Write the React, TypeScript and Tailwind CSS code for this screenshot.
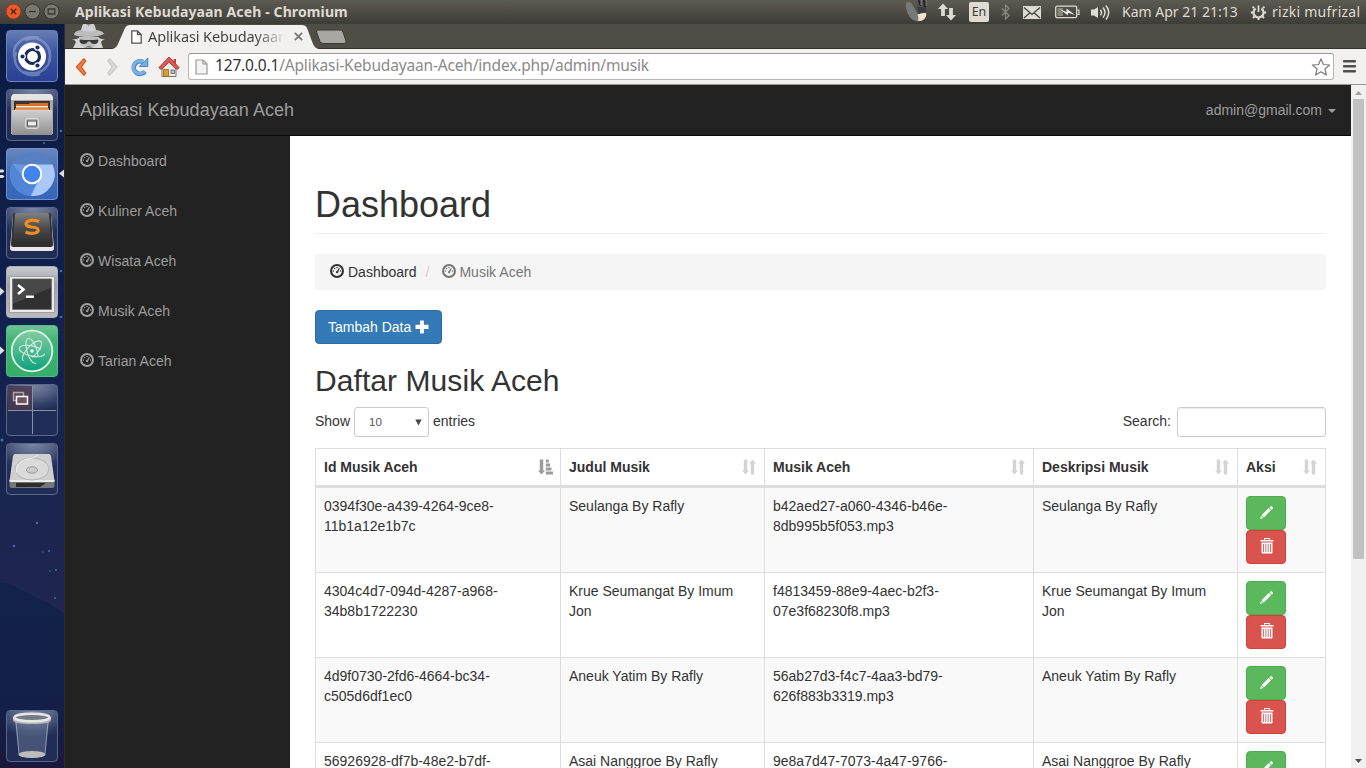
import React from "react";

/* ---------- page icons ---------- */

const Gauge = ({ className = "" }: { className?: string }) => (
  <svg className={`h-[14px] w-[14px] shrink-0 ${className}`} viewBox="0 0 14 14">
    <circle cx="7" cy="7" r="5.95" fill="none" stroke="currentColor" strokeWidth="2.1" />
    <g fill="currentColor">
      <circle cx="3.4" cy="6.9" r=".75" />
      <circle cx="4.6" cy="4.500" r=".75" />
      <circle cx="7" cy="3.500" r=".75" />
      <circle cx="10.500" cy="6.900" r=".75" />
      <path d="M8.900 3.800l.9.400-1.500 3.500c.2.900-.4 1.500-1.200 1.500-.9 0-1.400-.7-1.200-1.400.2-.5.600-.7 1.100-.8z" />
    </g>
  </svg>
);

const Plus = () => (
  <svg className="h-[14px] w-[14px]" viewBox="0 0 14 14" fill="currentColor">
    <path d="M5 .500h3.500q.4 0 .4.400V4.700H13q.5 0 .5.400V8.400q0 .5-.5.5H8.900V13q0 .4-.4.400H5.400Q5 13.400 5 13V8.900H1q-.5 0-.5-.5V5.100Q.5 4.700 1 4.700h4z" />
  </svg>
);

const Pencil = () => (
  <svg className="-mt-[2px] h-[15px] w-[15px]" viewBox="0 0 16 16" fill="#fff">
    <path d="M12.200 1.500q.8-.8 1.600 0l.8.8q.8.8 0 1.600l-1.100 1.100-2.400-2.400z" />
    <path d="M10.400 3.300l2.400 2.400-7.700 7.700-2.400-2.400z" />
    <path d="M2.200 11.700l2.200 2.200-3.400 1.100z" />
  </svg>
);

const Trash = () => (
  <svg className="h-[16px] w-[14px]" viewBox="0 0 14 16">
    <path d="M4.500 0h5q.5 0 .5.500V2h3q.500 0 .500.500V3.500H.500V2.500Q.500 2 1 2h3V.500Q4 0 4.500 0zM5 1v1h4V1z" fill="#fff" fillRule="evenodd" />
    <path d="M1.500 4.500h11v10q0 1-1 1h-9q-1 0-1-1z" fill="#fff" />
    <path d="M3.500 6v8M5.800 6v8M8.200 6v8M10.500 6v8" stroke="#d9706c" strokeWidth="1" />
  </svg>
);

const SortBoth = () => (
  <svg className="h-[16px] w-[14px] shrink-0" viewBox="0 0 14 16" fill="#d4d4d4">
    <path d="M1.800 .500h3.400V11.500H7L3.500 15.500 0 11.500h1.800zM8.800 15.500h3.400V4.500H14L10.500 .500 7 4.500h1.800z" />
  </svg>
);

const SortAsc = () => (
  <svg className="h-[16px] w-[15px] shrink-0" viewBox="0 0 15 16" fill="#9b9b9b">
    <path d="M1.800 .500h3.400V11.500H7L3.500 15.500 0 11.500h1.800zM7.800 .500h3v2.900h-3zM7.800 4.500h4.200v2.900H7.800zM7.800 8.500h5.600v2.900H7.800zM7.800 12.500H15v3H7.800z" />
  </svg>
);

/* ---------- launcher ---------- */

const Tile = ({ children, className = "" }: { children: React.ReactNode; className?: string }) => (
  <div className={`relative h-[52px] w-[52px] shrink-0 rounded-[4px] border ${className}`}>
    <svg className="absolute -left-px -top-px h-[52px] w-[52px]" viewBox="0 0 52 52">
      {children}
    </svg>
  </div>
);

const GLASS =
  "border-[#5c678a] bg-[radial-gradient(44px_26px_at_26px_0px,#7a86a3_0%,#5b6788_40%,#2f3c64_80%,#202d56_100%)]";

const Launcher = () => (
  <aside className="relative flex w-[65px] shrink-0 flex-col items-center gap-[7px] border-r border-[#2c2a35] bg-[#14214b] pb-[6px] pt-[6px]">
    <svg className="absolute left-0 top-0 h-[744px] w-[64px]" viewBox="0 0 64 744">
      <defs>
        <linearGradient id="sky" x1="0" y1="0" x2="0" y2="1">
          <stop offset="0" stopColor="#0b1a40" />
          <stop offset=".35" stopColor="#10204e" />
          <stop offset=".65" stopColor="#1a2450" />
          <stop offset=".8" stopColor="#202650" />
          <stop offset="1" stopColor="#1b2148" />
        </linearGradient>
        <linearGradient id="hill" x1="0" y1="0" x2="0" y2="1">
          <stop offset="0" stopColor="#12224a" />
          <stop offset=".7" stopColor="#131f48" />
          <stop offset="1" stopColor="#1a183c" />
        </linearGradient>
      </defs>
      <path fill="url(#sky)" d="M0 0h64v744H0z" />
      <path fill="url(#hill)" d="M0 558q8 0 18 6l28 14 18 11v155H0z" />
      <g fill="#3b74a8">
        <circle cx="61" cy="107" r="1.300" />
        <circle cx="44" cy="119" r="1" />
        <circle cx="61" cy="247" r="1.200" />
        <circle cx="61" cy="293" r="1.300" />
        <circle cx="2" cy="416" r="1.500" />
        <circle cx="37" cy="499" r="1.200" />
        <circle cx="14" cy="522" r="1.200" />
        <circle cx="49" cy="527" r="1" />
        <circle cx="56" cy="546" r="1.100" />
        <circle cx="50" cy="547" r=".8" />
        <circle cx="55" cy="574" r="1" />
        <circle cx="43" cy="528" r=".7" />
      </g>
      <g fill="#dedfe3">
        <path d="M0 145.500h3l1.500 1.500L3 148.500H0zM0 151h3l1.500 1.500L3 154H0zM64 145.500v8l-5-4z" />
        <path d="M0 263.500l4.500 4-4.500 4zM0 322.500l4.500 4-4.500 4z" />
      </g>
    </svg>

    <Tile className="border-[#6a80b8] bg-[linear-gradient(#667db4,#3a53a0_45%,#2a4193)]">
      <g fill="none" stroke="#a3b2d8" strokeOpacity=".5" strokeWidth="2.500">
        <path d="M9 29C4 15 18 4 33 8M19 10c15-6 29 6 24 22M43 21c5 15-9 26-25 21M34 44C18 49 5 36 10 22" />
      </g>
      <circle cx="26" cy="26.500" r="14" fill="#fff" />
      <circle cx="26.500" cy="26.500" r="7" fill="none" stroke="#1c2a5c" strokeWidth="3.200" />
      <g fill="#1c2a5c" stroke="#fff" strokeWidth="1.200">
        <circle cx="16.500" cy="26.500" r="2.700" />
        <circle cx="31.500" cy="17.500" r="2.700" />
        <circle cx="31.500" cy="35.500" r="2.700" />
      </g>
    </Tile>

    <Tile className={GLASS}>
      <defs>
        <linearGradient id="cab" x1="0" y1="0" x2="0" y2="1">
          <stop offset="0" stopColor="#d0d0d0" />
          <stop offset="1" stopColor="#8f8f8f" />
        </linearGradient>
      </defs>
      <path fill="#a8a8a8" d="M5 9q1-4 3-4h36q2 0 3 4v36H5z" />
      <path fill="#e4e4e4" d="M5 9q1-4 3-4h36q2 0 3 4v2H5z" />
      <path fill="#3b3532" d="M8 12h36v10H8z" />
      <path fill="#d8712d" d="M10 15h13l1-1h18v7H10z" />
      <path fill="#f4ead8" d="M10 17h32v1.500H10z" />
      <path fill="#ee9a55" d="M9 19.500h34V21H9z" />
      <path fill="url(#cab)" d="M7 21h38l1 1v24H6V22z" />
      <rect x="19.500" y="29.500" width="13" height="10" rx="2" fill="#b0b0b0" stroke="#dcdcdc" />
      <rect x="21.500" y="32" width="9" height="5" fill="#eee" stroke="#555" />
    </Tile>

    <Tile className="border-[#6f94cf] bg-[linear-gradient(#6887bd,#416cb5_50%,#3766ba)]">
      <circle cx="26" cy="26" r="22" fill="#6a99e2" />
      <path d="M6.500 16A22 22 0 0 1 46.500 17H26z" fill="#587fc2" />
      <path d="M6.500 16A22 22 0 0 0 24 48l8-17-14-1z" fill="#5085da" />
      <path d="M29 16.500h17.500A22 22 0 0 1 25 48l9-18z" fill="#a9c8f6" />
      <circle cx="26" cy="26" r="10.300" fill="#fff" />
      <circle cx="26" cy="26" r="8.300" fill="#4285f0" />
    </Tile>

    <Tile className={GLASS}>
      <defs>
        <linearGradient id="key" x1="0" y1="0" x2="0" y2="1">
          <stop offset="0" stopColor="#808080" />
          <stop offset=".55" stopColor="#4a4a4a" />
          <stop offset="1" stopColor="#333" />
        </linearGradient>
      </defs>
      <path d="M7 8L4 41q0 3 3 3h38q3 0 3-3L45 8z" fill="#e8e8e8" />
      <path d="M9 6h34q2 0 2 2l2 29q0 3-2 3H7q-2 0-2-3L7 8q0-2 2-2z" fill="#2f2f2f" />
      <path d="M10 6h32q1 0 1.200 2L45 34H7L8.800 8Q9 6 10 6z" fill="url(#key)" />
      <path d="M33 14.500q-6-2.500-10.500-.5-3.500 2-2 4 1 1.500 5 2 6 .5 6.500 2.500 1 2.500-3 3.500-5 1-9.500-1" fill="none" stroke="#f28c22" strokeWidth="3.200" />
    </Tile>

    <Tile className="border-[#aeb0b8] bg-[linear-gradient(#c9cacf,#9fa1a8_35%,#b9babd)]">
      <path d="M3.500 10.500h45v36h-45z" fill="#ebebeb" stroke="#a0a0a0" />
      <path d="M6.500 13h39v30.500h-39z" fill="#303030" stroke="#777" />
      <path d="M7 13.500h38v8L7 38z" fill="#484848" />
      <path d="M12 19l5.500 4.500L12 28" fill="none" stroke="#fff" strokeWidth="2.600" />
      <path d="M20 29.500h8V32h-8z" fill="#fff" />
    </Tile>

    <Tile className="border-[#55b982] bg-[linear-gradient(#6dc494,#3eb371_30%,#35ae69)]">
      <defs>
        <linearGradient id="atom" x1="0" y1="0" x2="0" y2="1">
          <stop offset="0" stopColor="#83cd9f" />
          <stop offset="1" stopColor="#0da27b" />
        </linearGradient>
      </defs>
      <circle cx="26" cy="26" r="20.300" fill="url(#atom)" stroke="#e1f4e9" strokeWidth="1.800" />
      <g fill="none" stroke="#d4eee0" strokeWidth="1.100" strokeLinecap="round">
        <ellipse cx="26" cy="26" rx="13" ry="5" transform="rotate(13 26 26)" strokeDasharray="52 8" />
        <ellipse cx="26" cy="26" rx="13" ry="5" transform="rotate(73 26 26)" strokeDasharray="50 10" />
        <ellipse cx="26" cy="26" rx="13" ry="5" transform="rotate(133 26 26)" strokeDasharray="48 12" />
      </g>
      <circle cx="26" cy="26" r="1.700" fill="#fff" />
    </Tile>

    <Tile className={GLASS}>
      <path d="M2 2h24v24H2z" fill="#4b3a50" opacity=".85" />
      <path d="M26.500 2v48M2 26.500h48" stroke="#8991a8" strokeWidth="1" />
      <path d="M7.500 8.500h10v8h-10z" fill="#5c4a5a" stroke="#aaa6b0" strokeWidth="1.500" />
      <path d="M10.500 12.500h11v7.500h-11z" fill="#6e5564" stroke="#fff" strokeWidth="1.500" />
    </Tile>

    <Tile className={GLASS}>
      <path d="M9 11h34q1 0 2 2l3.500 25h-45L7 13q1-2 2-2z" fill="#cfcfcf" />
      <path d="M3.500 37h45v6q0 2-2 2h-41q-2 0-2-2z" fill="#777" />
      <path d="M3.500 37h45v2h-45z" fill="#ededed" />
      <path d="M10 40h30l-6 4H10z" fill="#2c2c2c" />
      <ellipse cx="26" cy="26" rx="17" ry="11" fill="#dadada" stroke="#b4b4b4" />
      <ellipse cx="26" cy="27" rx="5.500" ry="3.300" fill="#c9c9c9" stroke="#9a9a9a" />
      <path d="M10 30q0-12 11-14 8-1 11-4" fill="none" stroke="#eee" />
    </Tile>

    <Tile className={`mt-auto ${GLASS}`}>
      <path d="M9 11h34l-4 34q-13 5-26 0z" fill="#8590ab" opacity=".38" />
      <path d="M10 12l3 32M42 12l-3 32" stroke="#c8ccd8" strokeWidth="1" opacity=".6" />
      <ellipse cx="26" cy="44.500" rx="13.500" ry="3.500" fill="#b9bdbd" />
      <path d="M7 7v3q0 4 19 4t19-4V7z" fill="#b5b8b8" />
      <ellipse cx="26" cy="7.500" rx="17.500" ry="3.700" fill="#747b87" stroke="#e6e7e5" strokeWidth="2.500" />
    </Tile>
  </aside>
);

/* ---------- system bar ---------- */

const WindowButton = ({ d, close }: { d: string; close?: boolean }) => (
  <svg className="h-[17px] w-[17px]" viewBox="0 0 17 17">
    <circle cx="8.500" cy="8.500" r="7.500" fill={close ? "#ec5a29" : "#7b7870"} stroke={close ? "#8c3a1c" : "#373530"} />
    <path d={d} stroke={close ? "#4b2515" : "#38362f"} strokeWidth="1.300" fill="none" />
  </svg>
);

const SystemBar = () => (
  <header className="flex h-6 shrink-0 items-center bg-[linear-gradient(#5d5a51,#3d3c37)] font-['Noto_Sans',sans-serif] text-[#dfdbd2]">
    <div className="-mt-px flex w-[75px] shrink-0 gap-[2px] pl-[5px]">
      <WindowButton close d="M5.800 5.800l5.400 5.400M11.200 5.800l-5.400 5.400" />
      <WindowButton d="M5 8.500h7" />
      <WindowButton d="M5.200 6h6.600v5H5.200z" />
    </div>
    <span className="-mt-[2px] whitespace-nowrap text-[14px] font-bold tracking-[0.12px]">Aplikasi Kebudayaan Aceh - Chromium</span>
    <svg className="ml-auto h-[24px] w-[24px] shrink-0" viewBox="0 0 24 24">
      <path d="M1 3q3-3 6 1l6 10q5-2 8-1 1 4-3 7-3 2-7 1-5-1-8-7Q0 8 1 3z" fill="#757977" />
      <path d="M12.500 14.500q4-2 8.500-1.500 1 4-3 7-3 1.500-5 .5 1-3-.5-6z" fill="#ece5cb" />
      <path d="M13 0h3v6l-2-1zM18 0h3v7l-2 1z" fill="#1d1e22" />
      <path d="M14.500 0h1.500v5M19.500 0H21v6" stroke="#8b92a0" strokeWidth=".8" fill="none" />
      <path d="M12 7h9v5q-4 0-7 2z" fill="#3c3f41" />
    </svg>
    <svg className="ml-[9px] h-[18px] w-[18px] shrink-0" viewBox="0 0 18 18" fill="#dfdbd2">
      <path d="M5 .500l5 5.500H6.900V13H3.100V6H0zM13 17.500L8 12h3.100V5h3.800v7H18z" />
    </svg>
    <span className="ml-[13px] flex h-5 w-5 shrink-0 items-center justify-center rounded-[2px] bg-[#dfdbd2] text-[12.500px] leading-5 text-[#3c3b37]">En</span>
    <svg className="ml-[12px] h-[16px] w-[9px] shrink-0" viewBox="0 0 9 16" fill="none" stroke="#8b8880" strokeWidth="1.200">
      <path d="M1 4.500l7 7L4.500 15V1L8 4.500l-7 7" />
    </svg>
    <svg className="ml-[13px] h-[13px] w-[18px] shrink-0" viewBox="0 0 18 13">
      <path d="M0 0h18v13H0z" fill="#dfdbd2" />
      <path d="M1 1.500l8 7 8-7M1 12l6-5.300M17 12l-6-5.300" fill="none" stroke="#45433d" strokeWidth="1.300" />
    </svg>
    <svg className="ml-[14px] h-[14px] w-[25px] shrink-0" viewBox="0 0 25 14">
      <rect x=".7" y="1.200" width="21" height="11.500" rx="1.500" fill="none" stroke="#dfdbd2" strokeWidth="1.300" />
      <path d="M22.500 5H24v4.500h-1.500" fill="none" stroke="#dfdbd2" strokeWidth="1.200" />
      <path d="M2.500 3H8v8H2.500z" fill="#89867d" />
      <path d="M4.500 4l7 3V3.500l8.500 6.500-7-2.300v2.800z" fill="#eceae4" />
    </svg>
    <svg className="ml-[10px] h-[17px] w-[21px] shrink-0" viewBox="0 0 21 17">
      <path d="M1 5.500h3L8 3v11l-4-2.500H1z" fill="#dfdbd2" />
      <path d="M10.500 5.800q2 2.700 0 5.400M13 3.500q4 5 0 10M16 1.500q5.500 7 0 14" fill="none" stroke="#dfdbd2" strokeWidth="1.500" />
    </svg>
    <span className="-mt-[2px] ml-[11px] w-[117px] shrink-0 whitespace-nowrap text-[14px]">Kam Apr 21 21:13</span>
    <svg className="ml-[11px] h-[17px] w-[17px] shrink-0" viewBox="0 0 17 17" fill="none" stroke="#dfdbd2">
      <path d="M5.500 4.500a5 5 0 1 0 6 0" strokeWidth="2.200" />
      <path d="M8.500 1.500v6.500" strokeWidth="1.800" />
      <path d="M4 4L2.600 2.600M13 4l1.400-1.400M3.500 8.500H.8M13.500 8.500h2.700M4.800 12.200l-1.800 1.800M12.200 12.200l1.800 1.800M8.500 13.300V16" strokeWidth="2" />
    </svg>
    <span className="-mt-[2px] ml-[5px] w-[94px] shrink-0 whitespace-nowrap text-[14px] tracking-[0.26px]">rizki mufrizal</span>
  </header>
);

/* ---------- browser chrome ---------- */

const TabStrip = () => (
  <div className="flex h-[25px] shrink-0 border-b border-[#35332e] bg-[#504d46] font-['Noto_Sans',sans-serif]">
    <svg className="ml-[6px] h-[24px] w-[36px]" viewBox="0 0 36 24">
      <path d="M9 9l2.500-8Q12 0 13 0h9q1 0 1.500 1L26 9z" fill="#d0d0d0" />
      <path d="M15 0l2.500 2L20 0z" fill="#8b8b8b" />
      <path d="M3 11q0-4 7-5 8 3 16 0 6 1 7 4-6 3-15 3T3 11z" fill="#bcbcbc" />
      <path d="M1 15q5 1 8-2h18q3 3 7 2-4 2-4 3l2 6H2l3-6q-1-2-4-3z" fill="#d6d6d6" />
      <path d="M8 13h20l-2 7-5 4h-7l-5-4z" fill="#bebebe" />
      <path d="M9 15.500q9 1 18 0l.5 1.500q-1 3-4 3-3.500 0-4.300-2.500h-2.400Q16 20 12.500 20q-3 0-4-3z" fill="#3a3a3a" />
      <path d="M14 23.500l4-2 4 2z" fill="#777" />
    </svg>
    <div className="relative ml-[5px] h-[25px] w-[208px]">
      <svg className="absolute left-0 top-0 h-[25px] w-[210px]" viewBox="0 0 210 25">
        <path d="M0 25q4-.5 6-5l7-16q1.500-3 5-3h172q3.500 0 5 3l6 16q2 4.500 6 5z" fill="#f2f1f0" />
      </svg>
      <div className="relative flex h-[25px] items-center pl-[19px]">
        <svg className="h-[14px] w-[11px]" viewBox="0 0 11 14">
          <path d="M.8.8h5.700l3.700 3.700v8.700H.8zM6.500.8v3.700h3.700" fill="#fff" stroke="#555" strokeWidth="1.300" />
        </svg>
        <span className="ml-[6px] w-[138px] whitespace-nowrap bg-[linear-gradient(90deg,#3f3e3b_78%,transparent)] bg-clip-text text-[14.5px] tracking-[-0.1px] text-transparent">
          Aplikasi Kebudayaan
        </span>
        <svg className="ml-[8px] h-[9px] w-[9px]" viewBox="0 0 9 9" stroke="#77756f" strokeWidth="1.700">
          <path d="M.8.8l7.400 7.400M8.200.8L.8 8.200" />
        </svg>
      </div>
    </div>
    <svg className="-ml-[5px] mt-[5px] h-[16px] w-[32px]" viewBox="0 0 32 16">
      <path d="M3 1h22q2 0 3 2l3 9q.5 2.500-2 2.500H8q-2 0-3-2L1.500 3Q1 1 3 1z" fill="#aaa7a2" stroke="#3b3934" />
    </svg>
  </div>
);

const Toolbar = () => (
  <div className="flex h-[36px] shrink-0 items-center border-b border-[#989793] bg-[#f2f1f0] font-['Noto_Sans',sans-serif]">
    <svg className="ml-[10px] h-[20px] w-[13px]" viewBox="0 0 13 20">
      <path d="M9 1.800L1.500 10 9 18.200l1.700-2L6.200 10l4.500-6.200z" fill="#f0814a" stroke="#dc5a22" strokeWidth="1.300" strokeLinejoin="round" />
    </svg>
    <svg className="ml-[18px] h-[20px] w-[13px]" viewBox="0 0 13 20">
      <path d="M3.500 1.800L11 10l-7.500 8.200-1.700-2L6.300 10 1.800 3.800z" fill="#dcdbd9" stroke="#cbcac8" strokeWidth="1.300" strokeLinejoin="round" />
    </svg>
    <svg className="ml-[11px] h-[20px] w-[19px]" viewBox="0 0 19 20">
      <path d="M15 14.500A6.300 6.300 0 1 1 13 5" fill="none" stroke="#4c86c0" strokeWidth="4.600" />
      <path d="M17.800 1v8.500H9.300z" fill="#72aee2" stroke="#4c86c0" />
      <path d="M14.700 14A6.300 6.300 0 1 1 13 5" fill="none" stroke="#79b3e6" strokeWidth="3" />
    </svg>
    <svg className="ml-[9px] h-[22px] w-[22px]" viewBox="0 0 22 22">
      <path d="M4 10l7-7 7 7v10.500H4z" fill="#efede7" stroke="#7b7973" />
      <path d="M15.500 3h2.500v6h-2.500z" fill="#c7463c" />
      <path d="M11 1l10 10.500-1 1.500h-2L11 6l-7 7H2l-1-1.500z" fill="#dc5853" stroke="#a8332c" strokeWidth=".9" />
      <path d="M5.500 13.500h5v7h-5z" fill="#dd9d28" stroke="#8f6420" strokeWidth=".8" />
      <path d="M13 14h3.500v3.500H13z" fill="#a9c2dd" stroke="#777" />
    </svg>
    <div className="ml-[8px] flex h-[27px] w-[1146px] items-center rounded-[3px] border border-[#b7b5b1] border-t-[#989690] bg-white pl-[6px] pr-[2px]">
      <svg className="h-[16px] w-[13px]" viewBox="0 0 13 16">
        <path d="M1 1h7l4 4v10H1zM8 1v4h4" fill="#f4f4f4" stroke="#999" strokeWidth="1.200" />
      </svg>
      <span className="-mt-px ml-[7px] whitespace-nowrap text-[15.5px] tracking-[-0.17px] text-[#8a8a8a]">
        <span className="text-[#333]">127.0.0.1</span>/Aplikasi-Kebudayaan-Aceh/index.php/admin/musik
      </span>
      <svg className="ml-auto h-[20px] w-[20px]" viewBox="0 0 20 20">
        <path d="M10 1.800l2.400 5.700 6.200.5-4.700 4 1.500 6.100-5.400-3.300-5.400 3.300L6.100 12l-4.700-4 6.200-.5z" fill="#fff" stroke="#7c7c7c" strokeWidth="1.200" strokeLinejoin="round" />
      </svg>
    </div>
    <svg className="-mt-px ml-[9px] h-[14px] w-[13px]" viewBox="0 0 13 14" fill="#4f4f4f">
      <rect y="1" width="13" height="2.600" rx=".8" />
      <rect y="6" width="13" height="2.600" rx=".8" />
      <rect y="11" width="13" height="2.600" rx=".8" />
    </svg>
  </div>
);

/* ---------- web page ---------- */

const MENU = ["Dashboard", "Kuliner Aceh", "Wisata Aceh", "Musik Aceh", "Tarian Aceh"];
const COLUMNS = ["Id Musik Aceh", "Judul Musik", "Musik Aceh", "Deskripsi Musik", "Aksi"];
const ROWS = [
  ["0394f30e-a439-4264-9ce8-11b1a12e1b7c", "Seulanga By Rafly", "b42aed27-a060-4346-b46e-8db995b5f053.mp3"],
  ["4304c4d7-094d-4287-a968-34b8b1722230", "Krue Seumangat By Imum Jon", "f4813459-88e9-4aec-b2f3-07e3f68230f8.mp3"],
  ["4d9f0730-2fd6-4664-bc34-c505d6df1ec0", "Aneuk Yatim By Rafly", "56ab27d3-f4c7-4aa3-bd79-626f883b3319.mp3"],
  ["56926928-df7b-48e2-b7df-", "Asai Nanggroe By Rafly", "9e8a7d47-7073-4a47-9766-"],
];

const CELL = "border-b border-r border-[#ddd] p-2 align-top";

const MusicTable = () => (
  <table className="mt-[11px] w-[1011px] table-fixed border-separate border-spacing-0 border-l border-[#ddd]">
    <colgroup>
      <col className="w-[245px]" />
      <col className="w-[204px]" />
      <col className="w-[269px]" />
      <col className="w-[204px]" />
      <col className="w-[88px]" />
    </colgroup>
    <thead>
      <tr>
        {COLUMNS.map((name, i) => (
          <th key={name} className="border-b-[3px] border-r border-t border-[#ddd] p-2 pr-[7px] text-left font-bold">
            <div className={i === 0 ? "flex h-5 items-center justify-between" : "flex h-5 items-center justify-between pr-px"}>
              {name}
              {i === 0 ? <SortAsc /> : <SortBoth />}
            </div>
          </th>
        ))}
      </tr>
    </thead>
    <tbody>
      {ROWS.map(([id, title, file], i) => (
        <tr key={id} className={i % 2 === 0 ? "bg-[#f9f9f9]" : "bg-white"}>
          <td className={CELL}>{id}</td>
          <td className={CELL}>{title}</td>
          <td className={CELL}>{file}</td>
          <td className={CELL}>{title}</td>
          <td className={CELL}>
            <button className="flex h-[34px] w-10 items-center justify-center rounded-[4px] border border-[#4cae4c] bg-[#5cb85c]">
              <Pencil />
            </button>
            <button className="flex h-[34px] w-10 items-center justify-center rounded-[4px] border border-[#d43f3a] bg-[#d9534f] pb-[2px] pl-px">
              <Trash />
            </button>
          </td>
        </tr>
      ))}
    </tbody>
  </table>
);

const Content = () => (
  <main className="min-w-0 flex-1 overflow-hidden bg-white px-[25px] pt-[49px]">
    <h1 className="h-[49px] border-b border-[#eee] text-[36px] leading-[40px]">Dashboard</h1>
    <nav className="mt-5 flex h-9 items-center rounded-[4px] bg-[#f5f5f5] px-[15px]">
      <Gauge className="-mt-[2px]" />
      <span className="ml-1">Dashboard</span>
      <span className="ml-[9px] text-[#ccc]">/</span>
      <Gauge className="-mt-[2px] ml-[13px] text-[#777]" />
      <span className="ml-[3px] tracking-[0.04px] text-[#777]">Musik Aceh</span>
    </nav>
    <button className="mt-5 flex h-[34px] w-[127px] items-center gap-1 rounded-[4px] border border-[#2e6da4] bg-[#337ab7] pl-3 text-white">
      Tambah Data
      <Plus />
    </button>
    <h2 className="mb-[10px] mt-5 text-[30px] leading-[33px] tracking-[0.07px]">Daftar Musik Aceh</h2>
    <div className="flex h-[30px] items-center">
      <span className="pb-[2px]">Show</span>
      <div className="ml-1 flex h-[30px] w-[75px] items-center justify-between rounded-[3px] border border-[#ccc] bg-white pl-[14px] pr-[6px] text-[11.500px] text-[#555]">
        10
        <svg className="h-[7px] w-[7px]" viewBox="0 0 7 7">
          <path d="M.300 .500h6.400L3.500 6.500z" fill="#444" />
        </svg>
      </div>
      <span className="ml-1 pb-[2px]">entries</span>
      <span className="ml-auto pb-[2px]">Search:</span>
      <input className="ml-[6px] h-[30px] w-[149px] rounded-[3px] border border-[#ccc] bg-white shadow-[inset_0_1px_1px_rgba(0,0,0,0.075)]" />
    </div>
    <MusicTable />
  </main>
);

const Scrollbar = () => (
  <div className="flex w-[15px] shrink-0 flex-col items-center justify-between bg-[#f1f1f1]">
    <div className="flex flex-col items-center">
      <svg className="h-[14px] w-[15px]" viewBox="0 0 15 14">
        <path d="M7.500 6l3.500 4H4z" fill="#a0a0a0" />
      </svg>
      <div className="h-[460px] w-[11px] bg-[#c1c1c1]" />
    </div>
    <svg className="h-[14px] w-[15px]" viewBox="0 0 15 14">
      <path d="M4 5h7L7.500 9z" fill="#505050" />
    </svg>
  </div>
);

const WebPage = () => (
  <div className="flex min-h-0 flex-1 font-['Liberation_Sans',Arial,sans-serif] text-[14px] leading-5 text-[#333]">
    <div className="flex min-w-0 flex-1 flex-col">
      <div className="flex h-[51px] shrink-0 items-center border-b border-[#080808] bg-[#222] px-[15px] text-[#9d9d9d]">
        <span className="text-[18px] tracking-[0.04px]">Aplikasi Kebudayaan Aceh</span>
        <span className="ml-auto">admin@gmail.com</span>
        <svg className="ml-[6px] mt-[2px] h-[4px] w-[8px]" viewBox="0 0 8 4">
          <path d="M0 0h8L4 4z" fill="#9d9d9d" />
        </svg>
      </div>
      <div className="flex min-h-0 flex-1">
        <ul className="w-[225px] shrink-0 bg-[#222] text-[#9d9d9d]">
          {MENU.map((item) => (
            <li key={item} className="flex h-[50px] items-center gap-1 pl-[15px] tracking-[0.05px]">
              <Gauge className="-mt-[2px]" />
              {item}
            </li>
          ))}
        </ul>
        <Content />
      </div>
    </div>
    <Scrollbar />
  </div>
);

export default function App() {
  return (
    <div className="flex h-[768px] w-[1366px] flex-col overflow-hidden">
      <SystemBar />
      <div className="flex min-h-0 flex-1">
        <Launcher />
        <div className="flex min-w-0 flex-1 flex-col">
          <TabStrip />
          <Toolbar />
          <WebPage />
        </div>
      </div>
    </div>
  );
}
